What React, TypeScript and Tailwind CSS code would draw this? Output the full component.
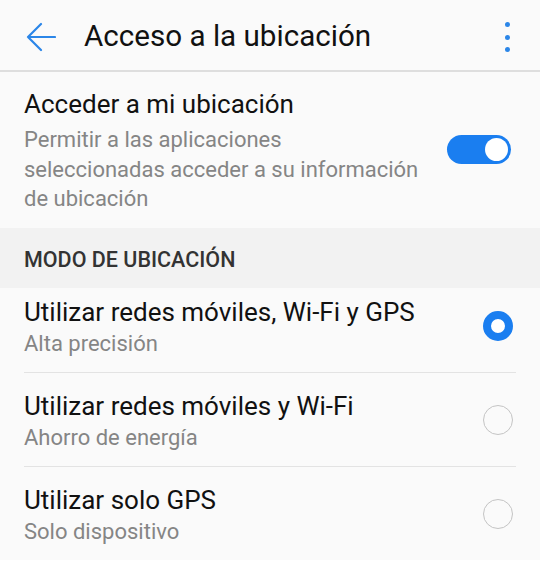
import React from 'react';

const options = [
  { title: 'Utilizar redes móviles, Wi-Fi y GPS', subtitle: 'Alta precisión', selected: true },
  { title: 'Utilizar redes móviles y Wi-Fi', subtitle: 'Ahorro de energía', selected: false },
  { title: 'Utilizar solo GPS', subtitle: 'Solo dispositivo', selected: false },
];

function Radio({ selected }: { selected: boolean }) {
  if (selected) {
    return <div className="w-[30px] h-[30px] rounded-full border-[8px] border-[#1a7ef0] bg-white" />;
  }
  return <div className="w-[30px] h-[30px] rounded-full border-[1.5px] border-[#c4c4c4]" />;
}

const App = () => {
  return (
    <div className="w-[540px] h-[567px] bg-[#fafafa] overflow-hidden font-['Roboto',sans-serif]">
      {/* Toolbar */}
      <div className="h-[72px] pt-[4px] flex items-center border-b-2 border-[#dedede]">
        <svg className="ml-[26px] w-[30px] h-[30px]" viewBox="0 0 30 30" fill="none" stroke="#2b86e8" strokeWidth="2.2" strokeLinecap="round" strokeLinejoin="round">
          <path d="M2 15 H29 M15 2 L2 15 L15 28" />
        </svg>
        <h1 className="ml-[28px] text-[29.6px] text-[#111] leading-none">Acceso a la ubicación</h1>
        <div className="ml-auto mr-[30px] flex flex-col gap-[7.5px]">
          <span className="w-[5px] h-[5px] rounded-full bg-[#2b86e8]" />
          <span className="w-[5px] h-[5px] rounded-full bg-[#2b86e8]" />
          <span className="w-[5px] h-[5px] rounded-full bg-[#2b86e8]" />
        </div>
      </div>

      {/* Master switch */}
      <div className="flex items-center pl-6 pr-[29px] pt-[16px] pb-[14px]">
        <div className="flex-1">
          <div className="text-[26px] text-[#111] leading-[32px]">Acceder a mi ubicación</div>
          <div className="mt-[5px] text-[22px] text-[#858585] leading-[29.5px] whitespace-nowrap">
            Permitir a las aplicaciones
            <br />
            seleccionadas acceder a su información
            <br />
            de ubicación
          </div>
        </div>
        <div className="mb-[3px] w-[64px] h-[29px] rounded-full bg-[#1a7ef0] flex items-center justify-end pr-[3px]">
          <div className="w-[23px] h-[23px] rounded-full bg-white" />
        </div>
      </div>

      {/* Section header */}
      <div className="h-[60px] pt-[5px] bg-[#f2f2f2] flex items-center pl-6">
        <span className="text-[21.5px] font-medium text-[#333]">MODO DE UBICACIÓN</span>
      </div>

      {/* Options */}
      <div>
        {options.map((o, i) => (
          <div key={i} className="mx-6">
            <div
              className={`flex items-center pb-[12px] ${i === 0 ? 'pt-[8px]' : 'pt-[17px]'} ${
                i < options.length - 1 ? 'border-b border-[#e3e3e3]' : ''
              }`}
            >
              <div className="flex-1">
                <div className="text-[26px] text-[#111] leading-[32px]">{o.title}</div>
                <div className="text-[22px] text-[#858585] leading-[32px]">{o.subtitle}</div>
              </div>
              <div className="mr-[3px] mb-[3px]">
                <Radio selected={o.selected} />
              </div>
            </div>
          </div>
        ))}
      </div>
      <div className="bg-white h-[20px]" />
    </div>
  );
};

export default App;
